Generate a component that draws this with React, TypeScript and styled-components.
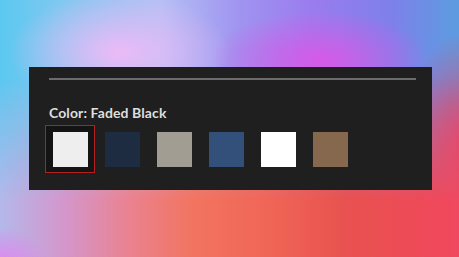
import React from "react";
import styled, { createGlobalStyle } from "styled-components";

const Global = createGlobalStyle`
  html, body { margin: 0; padding: 0; }
  body {
    width: 459px;
    height: 257px;
    overflow: hidden;
    font-family: Lato, "Liberation Sans", sans-serif;
  }
`;

const Backdrop = styled.div`
  position: relative;
  width: 459px;
  height: 257px;
  box-sizing: border-box;
  padding: 67px 27px 0 29px;
  background:
    radial-gradient(ellipse 110px 60px at 120px 52px, rgba(236, 186, 247, 1), rgba(236, 186, 247, 0) 100%),
    radial-gradient(ellipse 110px 50px at 320px 60px, rgba(214, 90, 230, 1), rgba(214, 90, 230, 0) 100%),
    radial-gradient(ellipse 70px 120px at 470px 150px, rgba(236, 64, 104, 1), rgba(236, 64, 104, 0) 100%),
    linear-gradient(90deg, #5cc8f0 0%, #84c8f0 15%, #b4c0f4 35%, #a094f0 52%, #9a7cee 68%, #7e80ea 85%, #5c9ce0 100%);

  &::before {
    content: "";
    position: absolute;
    inset: 0;
    background: linear-gradient(90deg, #b4b8ea 0%, #d496cc 14%, #ea8290 28%, #f27460 42%, #f06656 58%, #e8524f 75%, #ee4a58 92%, #f04860 100%);
    -webkit-mask-image: linear-gradient(180deg, transparent 30%, #000 78%);
    mask-image: linear-gradient(180deg, transparent 30%, #000 78%);
  }

  &::after {
    content: "";
    position: absolute;
    left: 0;
    bottom: 0;
    width: 60px;
    height: 50px;
    background: radial-gradient(ellipse 50px 40px at 0px 60px, rgba(228, 128, 240, 1), rgba(228, 128, 240, 0) 100%);
  }
`;

const Panel = styled.section`
  position: relative;
  z-index: 1;
  width: 403px;
  height: 123px;
  box-sizing: border-box;
  background: #1f1f1f;
  padding: 11px 16px 0 20px;
  display: flex;
  flex-direction: column;
`;

const Divider = styled.div`
  height: 2px;
  background: #6c6c6c;
  width: 367px;
`;

const Label = styled.div`
  margin-top: 24px;
  font-size: 14px;
  font-weight: 700;
  color: #dedede;
  line-height: 17px;
  letter-spacing: 0.1px;
`;

const Swatches = styled.div`
  margin-top: 4px;
  margin-left: -4px;
  display: flex;
  gap: 2px;
`;

const Cell = styled.div<{ $selected?: boolean }>`
  width: 50px;
  height: 48px;
  box-sizing: border-box;
  border: 1px solid ${(p) => (p.$selected ? "#b3201f" : "transparent")};
  background: ${(p) => (p.$selected ? "#141414" : "transparent")};
  display: flex;
  align-items: center;
  justify-content: center;
`;

const Chip = styled.div<{ $color: string }>`
  width: 35px;
  height: 35px;
  background: ${(p) => p.$color};
`;

const colors = ["#eeeeee", "#1e2c42", "#a19d93", "#33507a", "#ffffff", "#85684e"];

export default function App() {
  return (
    <>
      <Global />
      <Backdrop>
        <Panel>
          <Divider />
          <Label>Color: Faded Black</Label>
          <Swatches>
            {colors.map((c, i) => (
              <Cell key={c} $selected={i === 0}>
                <Chip $color={c} />
              </Cell>
            ))}
          </Swatches>
        </Panel>
      </Backdrop>
    </>
  );
}
